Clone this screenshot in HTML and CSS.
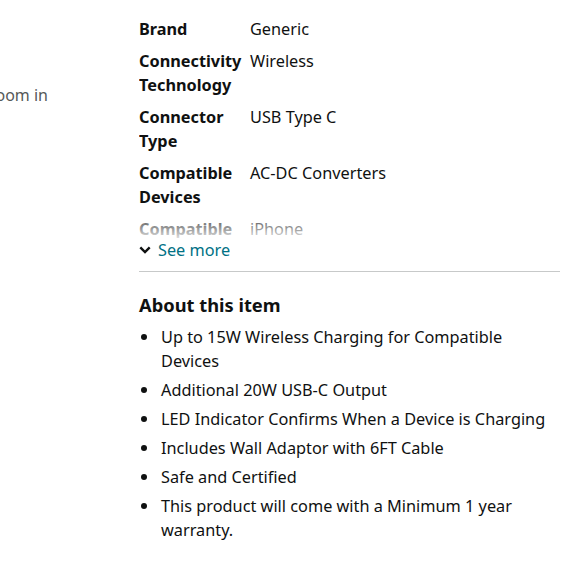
FILE: index.html
```html
<!DOCTYPE html>
<html>
<head>
<meta charset="utf-8">
<link rel="stylesheet" href="styles.css">
</head>
<body>
<div class="page">
  <div class="left">
    <div class="zoom-hint"><span>Roll over image to zoom in</span></div>
  </div>
  <div class="main">
    <div class="specs">
      <div class="spec-grid">
        <div class="label">Brand</div><div class="value">Generic</div>
        <div class="label">Connectivity Technology</div><div class="value">Wireless</div>
        <div class="label">Connector Type</div><div class="value">USB Type C</div>
        <div class="label">Compatible Devices</div><div class="value">AC-DC Converters</div>
        <div class="label">Compatible Phone Models</div><div class="value">iPhone</div>
      </div>
      <div class="fade"></div>
    </div>
    <a class="see-more" href="#"><svg class="chev" viewBox="0 0 12 8" width="12" height="8"><path d="M1.3 1.3 L6 6 L10.7 1.3" fill="none" stroke="#0F1111" stroke-width="2.4"/></svg><span>See more</span></a>
    <hr class="divider">
    <h2 class="about-title">About this item</h2>
    <ul class="bullets">
      <li>Up to 15W Wireless Charging for Compatible Devices</li>
      <li>Additional 20W USB-C Output</li>
      <li>LED Indicator Confirms When a Device is Charging</li>
      <li>Includes Wall Adaptor with 6FT Cable</li>
      <li>Safe and Certified</li>
      <li>This product will come with a Minimum 1 year warranty.</li>
    </ul>
  </div>
</div>
</body>
</html>
```
FILE: styles.css
```css
html, body {
  margin: 0;
  padding: 0;
  background: #ffffff;
}
body {
  font-family: "Noto Sans", "Open Sans", sans-serif;
  font-size: 16.3px;
  line-height: 24px;
  color: #0F1111;
}
.page {
  display: flex;
  width: 580px;
}
.left {
  width: 139px;
  flex: none;
}
.zoom-hint {
  margin-top: 83px;
  width: 48px;
  overflow: hidden;
  display: flex;
  justify-content: flex-end;
  white-space: nowrap;
  color: #565959;
  font-size: 16px;
}
.zoom-hint span { flex: none; }
.main {
  width: 421px;
  flex: none;
  padding-top: 17px;
}
.specs {
  position: relative;
  height: 221px;
  overflow: hidden;
}
.spec-grid {
  display: grid;
  grid-template-columns: 111px 1fr;
  row-gap: 8px;
}
.label {
  font-weight: 700;
  padding-right: 4px;
}
.fade {
  position: absolute;
  left: 0;
  right: 0;
  bottom: 0;
  height: 26px;
  background: linear-gradient(to bottom, rgba(255,255,255,0.1), rgba(255,255,255,0.85));
}
.see-more {
  display: flex;
  align-items: center;
  gap: 7px;
  color: #007185;
  text-decoration: none;
  height: 24px;
}
.chev { flex: none; }
.divider {
  margin: 9px 0 0;
  border: none;
  border-top: 1px solid #c7c9c9;
  height: 0;
}
.about-title {
  margin: 19px 0 0;
  font-size: 18.3px;
  line-height: 28px;
  font-weight: 700;
}
.bullets {
  list-style: none;
  margin: 6px 0 0;
  padding: 0;
}
.bullets li {
  position: relative;
  padding-left: 22px;
  margin-bottom: 5px;
}
.bullets li::before {
  content: "";
  position: absolute;
  left: 2px;
  top: 9px;
  width: 6px;
  height: 6px;
  border-radius: 50%;
  background: #0F1111;
}
```
